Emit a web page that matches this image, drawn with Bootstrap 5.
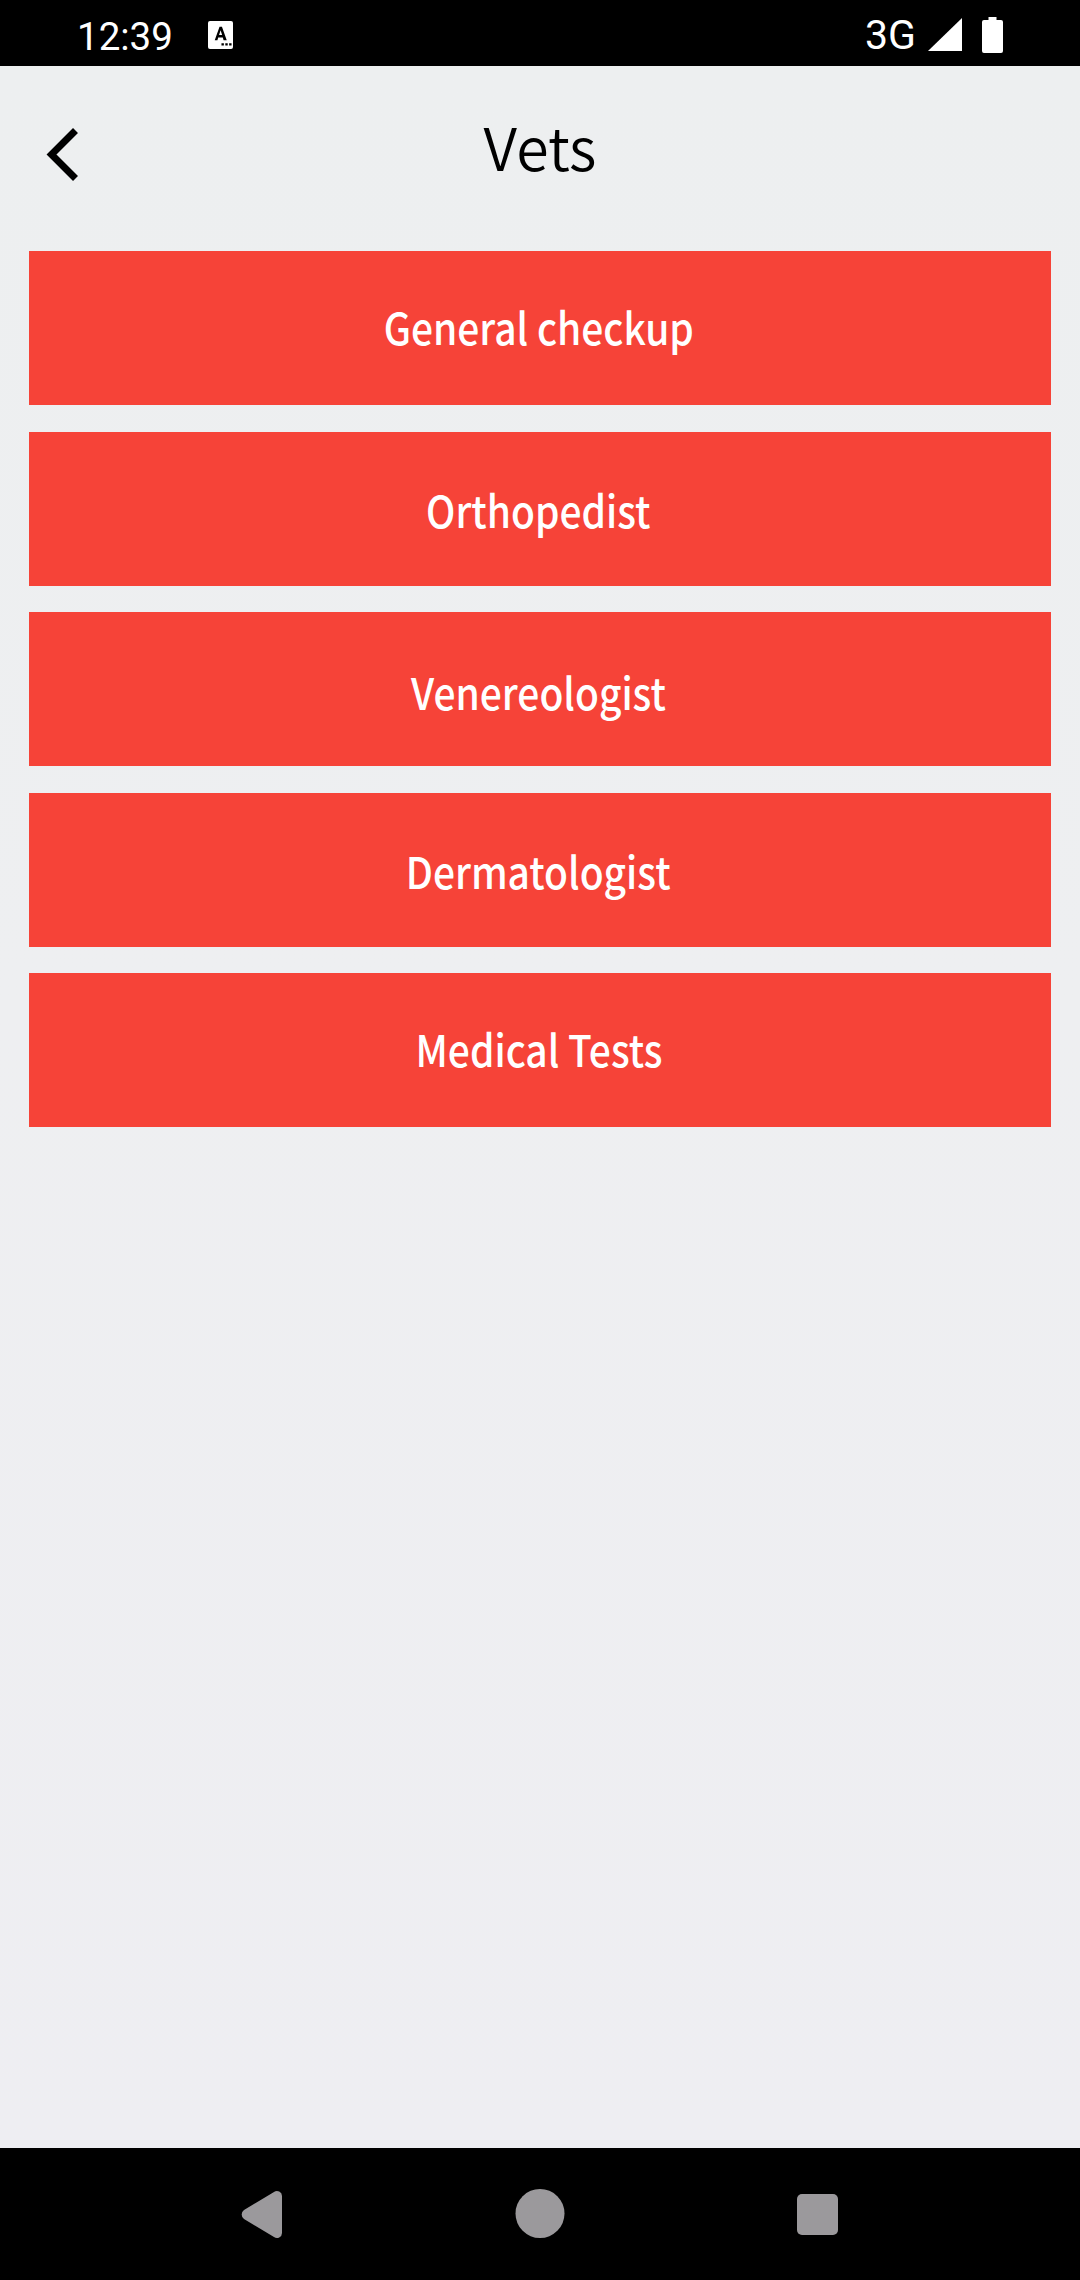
<!DOCTYPE html>
<html lang="en">
<head>
<meta charset="utf-8">
<title>Vets</title>
<link href="https://cdn.jsdelivr.net/npm/bootstrap@5.3.0/dist/css/bootstrap.min.css" rel="stylesheet">
<style>
html,body{height:100%;margin:0}
body{font-family:"Noto Sans CJK JP","Noto Sans CJK SC","Noto Sans",sans-serif;background:#000}
.phone{width:1080px;height:2280px}
.statusbar{height:66px;background:#000;color:#fff;font-family:Roboto,sans-serif;font-size:38.5px;line-height:1;padding:3px 0 0 77px}
.clock{margin-right:35px;margin-top:5px}
.notif{width:25px;height:28px;display:block}
.net{margin-right:12px;font-size:41px;margin-top:1px}
.sig{width:34px;height:33px;display:block;margin-right:20px}
.batt{width:21px;height:36px;display:block;margin-right:77px}
.screen{background:linear-gradient(180deg,#edeff0 0%,#eeeff1 45%,#eeeef2 100%)}
.topbar{height:185px;padding-left:46px;padding-top:61px}
.chev{width:34px;height:56px;display:block}
.ttl{left:0;right:0;top:37px;font-size:59px;font-weight:350;line-height:86px;color:#000;text-align:center}
.stack{padding:0 29px;gap:26.5px}
.vetbtn{height:154px;border-radius:0;border:0;background:#f64338;color:#fff;font-size:44px;font-weight:500;line-height:1;padding:0}
.vetbtn:hover,.vetbtn:focus{background:#f64338;color:#fff}
.vetlabel{display:inline-block;transform:translateX(-1.5px) scaleX(.885)}
.nudge-up{padding-bottom:5px}
.nudge-dn{padding-top:1px}
.nudge-dn2{padding-top:4px}
.navbarx{height:132px;background:#000}
.nav-ic{display:block}
</style>
</head>
<body>
<div class="phone d-flex flex-column">
  <div class="statusbar d-flex align-items-center">
    <span class="clock">12:39</span>
    <svg class="notif" viewBox="0 0 26 29"><rect width="26" height="29" rx="2" fill="#fff"/><path d="M7 20 12 6h2.500l5 14h-3.300l-.8-3h-4.800l-.8 3zM11.500 14.500h3.200L13.100 9.500z" fill="#000" fill-rule="evenodd"/><path d="M14 23h2.500v2.500H14zM18 23h2.500v2.500H18zM22 23h2.500v2.500H22z" fill="#000"/></svg>
    <span class="net ms-auto">3G</span>
    <svg class="sig" viewBox="0 0 34 33"><path d="M0 33 34 0v33z" fill="#fff"/></svg>
    <svg class="batt" viewBox="0 0 21 36"><path d="M6.500 0h8v3H19a2 2 0 0 1 2 2v29a2 2 0 0 1-2 2H2a2 2 0 0 1-2-2V5a2 2 0 0 1 2-2h4.500z" fill="#fff"/></svg>
  </div>
  <div class="screen flex-grow-1">
    <div class="topbar position-relative d-flex align-items-start">
      <svg class="chev" viewBox="0 0 34 56"><path d="M29.500 3.500 5.500 27.500l24 24" fill="none" stroke="#000" stroke-width="7"/></svg>
      <div class="ttl position-absolute">Vets</div>
    </div>
    <div class="stack d-flex flex-column">
      <button class="btn vetbtn nudge-up"><span class="vetlabel">General checkup</span></button>
      <button class="btn vetbtn nudge-dn"><span class="vetlabel">Orthopedist</span></button>
      <button class="btn vetbtn nudge-dn2"><span class="vetlabel">Venereologist</span></button>
      <button class="btn vetbtn nudge-dn"><span class="vetlabel">Dermatologist</span></button>
      <button class="btn vetbtn nudge-up"><span class="vetlabel">Medical Tests</span></button>
    </div>
  </div>
  <div class="navbarx position-relative">
    <svg class="nav-ic" width="1080" height="132" viewBox="0 0 1080 132">
      <path d="M282 48a5 5 0 0 0-8-4L244 62a5.500 5.500 0 0 0 0 9l30 18a5 5 0 0 0 8-4z" fill="#9b999c"/>
      <ellipse cx="540" cy="65.500" rx="24.500" ry="24.500" fill="#9b999c"/>
      <rect x="797" y="46" width="41" height="41" rx="5" fill="#9b999c"/>
    </svg>
  </div>
</div>
<script src="https://cdn.jsdelivr.net/npm/bootstrap@5.3.0/dist/js/bootstrap.bundle.min.js"></script>
</body>
</html>
